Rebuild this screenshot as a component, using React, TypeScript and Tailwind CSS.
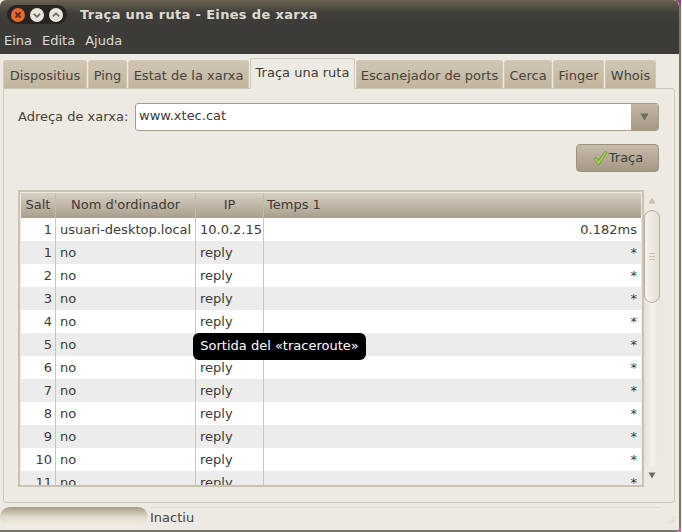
import React from 'react';

const tabs = [
  { label: 'Dispositius', w: 'w-[84px]' },
  { label: 'Ping', w: 'w-[39px]' },
  { label: 'Estat de la xarxa', w: 'w-[121px]' },
  { label: 'Traça una ruta', w: 'w-[105px]', active: true },
  { label: 'Escanejador de ports', w: 'w-[147px]' },
  { label: 'Cerca', w: 'w-[48px]' },
  { label: 'Finger', w: 'w-[51px]' },
  { label: 'Whois', w: 'w-[51px]' },
];

const rows = [
  ['1', 'usuari-desktop.local', '10.0.2.15', '0.182ms'],
  ...Array.from({ length: 11 }, (_, i) => [String(i + 1), 'no', 'reply', '*']),
];

function WindowButtons() {
  return (
    <div className="flex h-[19px] w-[60px] items-center justify-between rounded-full bg-[#262522] px-[3px]">
      <svg width="16" height="16" viewBox="0 0 16 16">
        <circle cx="8" cy="8" r="7" fill="#e8682f" />
        <path d="M5.5 5.5l5 5M10.5 5.5l-5 5" stroke="#5c2c1a" strokeWidth="1.8" />
      </svg>
      <svg width="16" height="16" viewBox="0 0 16 16">
        <circle cx="8" cy="8" r="7" fill="#e8e4db" />
        <path d="M4.8 6.8L8 9.8l3.2-3" stroke="#6a675f" strokeWidth="1.7" fill="none" />
      </svg>
      <svg width="16" height="16" viewBox="0 0 16 16">
        <circle cx="8" cy="8" r="7" fill="#e8e4db" />
        <path d="M4.8 9.3L8 6.3l3.2 3" stroke="#6a675f" strokeWidth="1.7" fill="none" />
      </svg>
    </div>
  );
}

export default function App() {
  return (
    <div className="h-[532px] w-[682px] overflow-hidden bg-[#f4f1ec] font-['DejaVu_Sans',sans-serif] text-[13px] text-[#3c3b37]">
      <div className="relative flex h-[532px] w-[681px] flex-col border-r-2 border-b-2 border-[#7c7464] bg-[#edeae3]">
        <div className="flex h-[27px] items-center gap-[13px] rounded-t-md bg-gradient-to-b from-[#6a6252] via-[#3f3e39] to-[#3c3b37] pl-[7px] pt-[2px]">
          <WindowButtons />
          <span className="font-bold tracking-[0.33px] text-[#dfdbd2]">Traça una ruta - Eines de xarxa</span>
        </div>
        <div className="flex h-[27px] items-center gap-[10px] bg-[#3c3b37] pl-[4px] text-[#dfdbd2]">
          <span>Eina</span>
          <span>Edita</span>
          <span>Ajuda</span>
        </div>

        <div className="flex h-[34px] items-end pl-[3px] pt-[4px]">
          {tabs.map((t) =>
            t.active ? (
              <div key={t.label} className={`${t.w} z-10 -mb-px mr-px flex h-[31px] items-center justify-center rounded-t-[3px] border border-b-0 border-[#d2cbbb] bg-[#edeae3] pb-[2px] text-[#3c3b37]`}>
                {t.label}
              </div>
            ) : (
              <div key={t.label} className={`${t.w} mr-px flex h-[28px] items-center justify-center rounded-t-[3px] border border-b-0 border-[#d2c9b5] bg-gradient-to-b from-[#cfc6b3] to-[#c1b59e] pt-[2px] text-[#47433b]`}>
                {t.label}
              </div>
            ),
          )}
        </div>

        <div className="mx-[3px] flex h-[415px] w-[672px] flex-col rounded-b-[3px] rounded-tr-[3px] border border-[#cfc8b8] px-[14px] pt-[14px]">
          <div className="flex h-[28px] items-center">
            <span className="w-[117px] pb-[1px] text-[#47433b]">Adreça de xarxa:</span>
            <div className="flex h-[28px] w-[524px] rounded-[3px] border border-[#a89c88] bg-white">
              <div className="flex-1 pl-[3px] leading-[23px] text-[#3c3b37]">www.xtec.cat</div>
              <div className="flex w-[27px] items-center justify-center rounded-r-[2px] bg-gradient-to-b from-[#c2b7a5] to-[#a49885]">
                <svg width="10" height="8" viewBox="0 0 10 8"><path d="M0.5 0.5h8L4.5 7.5z" fill="#6e6a60" /></svg>
              </div>
            </div>
          </div>

          <div className="mt-[13px] flex justify-end pr-[1px]">
            <div className="flex h-[28px] w-[83px] items-center justify-center gap-[1px] rounded-[4px] border border-[#9c917f] bg-gradient-to-b from-[#c6bbaa] to-[#a49885] pb-[1px] text-[#3c3b37]">
              <svg width="16" height="16" viewBox="0 0 16 16">
                <path d="M1.5 9l2.5-1.5 2.3 3.2L12.8 1.5l2.2 1L6.8 15z" fill="#9ccb4e" stroke="#6f9a2c" strokeWidth="0.8" />
              </svg>
              <span>Traça</span>
            </div>
          </div>

          <div className="mt-[18px] flex">
            <div className="h-[297px] w-[626px] overflow-hidden border-2 border-[#cbc3ae] bg-[#edeae3] px-[1px] pt-[1px]">
              <div className="flex h-[25px] w-[620px] bg-gradient-to-b from-[#d7d0c4] to-[#a99e8c] leading-[23px] text-[#3c3b37]">
                <div className="w-[35px] border-r border-[#c4bbab] text-center">Salt</div>
                <div className="w-[140px] border-r border-[#c4bbab] text-center">Nom d'ordinador</div>
                <div className="w-[68px] border-r border-[#c4bbab] text-center">IP</div>
                <div className="flex-1 pl-[3px]">Temps 1</div>
              </div>
              {rows.map((r, i) => (
                <div key={i} className={`flex h-[23px] w-[620px] leading-[23px] ${i % 2 === 0 ? 'bg-white' : 'bg-[#ececec]'}`}>
                  <div className="h-full w-[35px] border-r border-[#c6c6c6] pr-[3px] text-right">{r[0]}</div>
                  <div className="h-full w-[140px] border-r border-[#c6c6c6] pl-[4px]">{r[1]}</div>
                  <div className="h-full w-[68px] border-r border-[#c6c6c6] pl-[4px]">{r[2]}</div>
                  <div className="h-full flex-1 pr-[4px] text-right">{r[3]}</div>
                </div>
              ))}
            </div>

            <div className="flex h-[297px] w-[16px] flex-col items-center">
              <svg className="mt-[7px]" width="8" height="7" viewBox="0 0 8 7"><path d="M4 0.5L7.5 6.5H0.5z" fill="#c6c0b2" /></svg>
              <div className="mt-[6px] h-[257px] w-[16px] rounded-b-full bg-gradient-to-r from-[#e6e1d7] via-[#f4f2ed] to-[#e9e5dc]">
                <div className="flex h-[93px] w-[16px] flex-col items-center justify-center gap-[2px] rounded-full border border-[#b8ae9c] bg-gradient-to-r from-[#f6f3ee] to-[#e4dfd3]">
                  <div className="h-px w-[6px] bg-[#c8c1b2]" />
                  <div className="h-px w-[6px] bg-[#c8c1b2]" />
                  <div className="h-px w-[6px] bg-[#c8c1b2]" />
                </div>
              </div>
              <svg className="mt-[5px]" width="8" height="7" viewBox="0 0 8 7"><path d="M0.5 0.5h7L4 6.5z" fill="#6e6a60" /></svg>
            </div>
          </div>
        </div>

        <div className="flex flex-1 items-start pt-[4px]">
          <div className="h-[21px] w-[148px] rounded-[10px] bg-gradient-to-b from-[#a89c88] via-[#e4dccf] to-[#f3efe8]" />
          <div className="ml-[2px] flex h-[21px] w-[510px] items-center border-t border-[#e0dbd0] pb-[1px] text-[#47433b]">Inactiu</div>
        </div>

        <svg className="absolute right-[3px] bottom-[4px]" width="12" height="12" viewBox="0 0 12 12">
          <g fill="#d8d2c5">
            <rect x="10" y="2" width="1" height="1" /><rect x="8" y="4" width="1" height="1" /><rect x="10" y="4" width="1" height="1" />
            <rect x="6" y="6" width="1" height="1" /><rect x="8" y="6" width="1" height="1" /><rect x="10" y="6" width="1" height="1" />
            <rect x="4" y="8" width="1" height="1" /><rect x="6" y="8" width="1" height="1" /><rect x="8" y="8" width="1" height="1" /><rect x="10" y="8" width="1" height="1" />
          </g>
        </svg>

        <svg className="absolute top-0 right-[-2px]" width="6" height="5" viewBox="0 0 6 5"><path d="M0 0h6v5z" fill="#8a4a78" /></svg>
        <svg className="absolute right-[-2px] bottom-[-2px]" width="5" height="5" viewBox="0 0 5 5"><path d="M5 0v5H0z" fill="#c06c94" /></svg>

        <div className="absolute top-[333px] left-[193px] flex h-[27px] w-[173px] items-center justify-center rounded-[6px] bg-black pb-[1px] text-white">
          Sortida del «traceroute»
        </div>
      </div>
    </div>
  );
}
